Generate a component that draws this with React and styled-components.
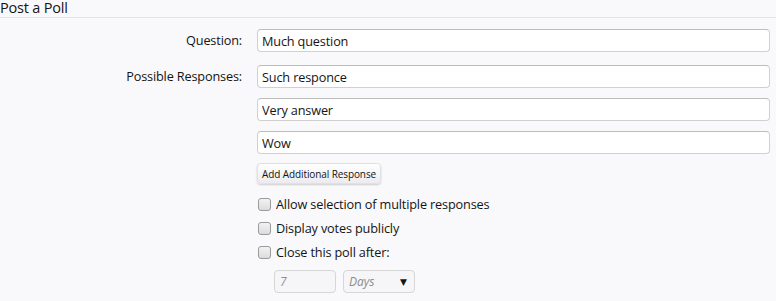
import React from "react";
import styled, { createGlobalStyle } from "styled-components";

const Global = createGlobalStyle`
  html, body {
    margin: 0;
    padding: 0;
    background: #f9f9fb;
  }
  body {
    font-family: "Open Sans", "DejaVu Sans", sans-serif;
    color: #141414;
  }
`;

const Page = styled.div`
  width: 776px;
  height: 301px;
  overflow: hidden;
  background: #f9f9fb;
`;

const Heading = styled.h3`
  margin: 0;
  padding: 1px 0 0 0;
  height: 16px;
  font-size: 14.5px;
  line-height: 14px;
  font-weight: normal;
  letter-spacing: -0.2px;
  color: #141414;
  border-bottom: 1px solid #d7e6f2;
`;

const Form = styled.div`
  display: flex;
  flex-direction: column;
  padding: 11px 6px 0 0;
`;

const Row = styled.div`
  display: grid;
  grid-template-columns: 242px 1fr;
  column-gap: 15px;
  margin-bottom: ${(p) => p.gap || 0}px;
`;

const Label = styled.div`
  text-align: right;
  font-size: 12.7px;
  letter-spacing: -0.15px;
  line-height: 23px;
`;

const Controls = styled.div`
  display: flex;
  flex-direction: column;
  gap: 10px;
`;

const TextBox = styled.input`
  box-sizing: border-box;
  height: 23px;
  width: 100%;
  margin: 0;
  padding: 0 4px;
  border: 1px solid #d0d0d0;
  border-top-color: #bdbdbd;
  border-radius: 4px;
  background: #fff;
  font-family: inherit;
  font-size: 12.7px;
  letter-spacing: -0.15px;
  color: #141414;
  outline: none;
`;

const Button = styled.button`
  align-self: flex-start;
  box-sizing: border-box;
  height: 21px;
  padding: 0 4px;
  margin: -1px 0 0 0;
  border: 1px solid #e0e0e6;
  border-radius: 4px;
  background: linear-gradient(#ffffff, #ececf0);
  box-shadow: 0 1px 2px rgba(0, 0, 0, 0.18);
  font-family: inherit;
  font-size: 10px;
  letter-spacing: -0.1px;
  color: #141414;
`;

const Options = styled.div`
  display: flex;
  flex-direction: column;
  gap: 4px;
`;

const Check = styled.label`
  display: flex;
  align-items: center;
  gap: 5px;
  height: 20px;
  font-size: 12.7px;
  letter-spacing: -0.15px;
`;

const Box = styled.span`
  box-sizing: border-box;
  width: 13px;
  height: 13px;
  margin-left: 1px;
  border: 1px solid #9a9a9a;
  border-radius: 3px;
  background: linear-gradient(#f2f2f2, #dcdcdc);
`;

const Sub = styled.div`
  display: flex;
  gap: 7px;
  padding-left: 17px;
  margin-top: 4px;
`;

const Disabled = styled.div`
  box-sizing: border-box;
  height: 23px;
  width: ${(p) => p.w}px;
  padding: 0 5px;
  display: flex;
  align-items: center;
  justify-content: space-between;
  border: 1px solid #d6d6d6;
  border-radius: 4px;
  background: #f6f6f8;
  color: #8c8c8c;
  font-size: 12px;
  font-style: italic;
`;

const Arrow = styled.span`
  font-style: normal;
  color: #141414;
  font-size: 9px;
  margin-right: 2px;
`;

export default function App() {
  return (
    <Page>
      <Global />
      <Heading>Post a Poll</Heading>
      <Form>
        <Row gap={13}>
          <Label>Question:</Label>
          <TextBox defaultValue="Much question" />
        </Row>
        <Row>
          <Label>Possible Responses:</Label>
          <Controls>
            <TextBox defaultValue="Such responce" />
            <TextBox defaultValue="Very answer" />
            <TextBox defaultValue="Wow" />
            <Button>Add Additional Response</Button>
            <Options>
              <Check>
                <Box />
                Allow selection of multiple responses
              </Check>
              <Check>
                <Box />
                Display votes publicly
              </Check>
              <Check>
                <Box />
                Close this poll after:
              </Check>
              <Sub>
                <Disabled w={62}>7</Disabled>
                <Disabled w={72}>
                  Days
                  <Arrow>▼</Arrow>
                </Disabled>
              </Sub>
            </Options>
          </Controls>
        </Row>
      </Form>
    </Page>
  );
}
